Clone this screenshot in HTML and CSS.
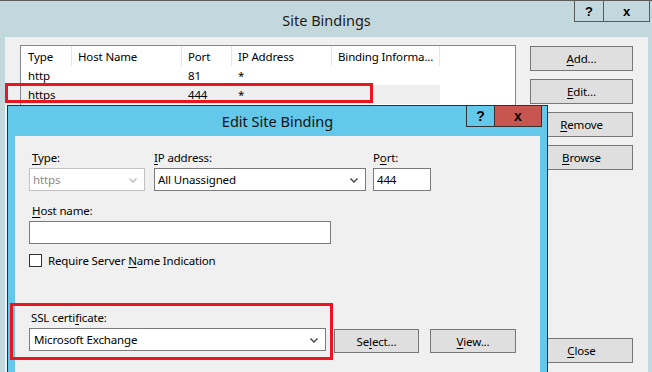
FILE: index.html
```html
<!DOCTYPE html>
<html>
<head>
<meta charset="utf-8">
<title>Site Bindings</title>
<link rel="stylesheet" href="styles.css">
</head>
<body>
<div class="win">
  <div class="titlebar">
    <span class="title">Site Bindings</span>
  </div>
  <div class="caption">
    <span class="cbtn cbtn-help">?</span><span class="cbtn cbtn-close">x</span>
  </div>
  <div class="client">
    <div class="list">
      <div class="lrow lhead">
        <span class="c c1">Type</span><span class="c c2">Host Name</span><span class="c c3">Port</span><span class="c c4">IP Address</span><span class="c c5">Binding Informa...</span>
      </div>
      <div class="lrow">
        <span class="c c1">http</span><span class="c c2"></span><span class="c c3">81</span><span class="c c4">*</span><span class="c c5"></span>
      </div>
      <div class="lrow sel">
        <span class="c c1">https</span><span class="c c2"></span><span class="c c3">444</span><span class="c c4">*</span><span class="c c5"></span>
      </div>
    </div>
    <div class="side">
      <button class="btn"><u>A</u>dd...</button>
      <button class="btn"><u>E</u>dit...</button>
      <button class="btn"><u>R</u>emove</button>
      <button class="btn"><u>B</u>rowse</button>
      <button class="btn btn-close"><u>C</u>lose</button>
    </div>
  </div>
</div>

<div class="mark mark-row"></div>

<div class="dlg">
  <div class="dlg-title">Edit Site Binding</div>
  <div class="dlg-caption">
    <span class="dbtn dbtn-help">?</span><span class="dbtn dbtn-close">x</span>
  </div>
  <div class="dlg-body">
    <div class="row1">
      <div class="field f-type">
        <label class="lbl lbl-in"><u>T</u>ype:</label>
        <div class="combo disabled"><span>https</span>
          <svg class="chev" width="8" height="5" viewBox="0 0 8 5"><polyline points="0.5,0.5 4,4 7.5,0.5" fill="none" stroke="currentColor" stroke-width="1.4"/></svg>
        </div>
      </div>
      <div class="field f-ip">
        <label class="lbl"><u>I</u>P address:</label>
        <div class="combo"><span>All Unassigned</span>
          <svg class="chev" width="8" height="5" viewBox="0 0 8 5"><polyline points="0.5,0.5 4,4 7.5,0.5" fill="none" stroke="currentColor" stroke-width="1.4"/></svg>
        </div>
      </div>
      <div class="field f-port">
        <label class="lbl">P<u>o</u>rt:</label>
        <div class="text">444</div>
      </div>
    </div>
    <label class="lbl lbl-in lbl-host"><u>H</u>ost name:</label>
    <div class="text host"></div>
    <div class="check">
      <span class="box"></span>
      <span>Require Server <u>N</u>ame Indication</span>
    </div>
    <label class="lbl lbl-ssl">SSL certi<u>f</u>icate:</label>
    <div class="row-ssl">
      <div class="combo ssl"><span>Microsoft Exchange</span>
        <svg class="chev" width="8" height="5" viewBox="0 0 8 5"><polyline points="0.5,0.5 4,4 7.5,0.5" fill="none" stroke="currentColor" stroke-width="1.4"/></svg>
      </div>
      <button class="btn btn-select">Se<u>l</u>ect...</button>
      <button class="btn btn-view"><u>V</u>iew...</button>
    </div>
  </div>
</div>

<div class="mark mark-ssl"></div>
</body>
</html>
```

FILE: styles.css
```css
* { box-sizing: border-box; margin: 0; padding: 0; }

html, body {
  width: 652px;
  height: 372px;
  overflow: hidden;
}

body {
  position: relative;
  font-family: "Noto Sans", "Open Sans", sans-serif;
  font-size: 11.5px;
  letter-spacing: -0.15px;
  color: #000;
  background: #c3d8dd;
}

u { text-decoration: underline; text-underline-offset: 2px; }

/* ---------- main window ---------- */
.win {
  position: relative;
  height: 372px;
  border-top: 1px solid #5d5d5d;
  background: #c3d8dd;
  padding: 0 4px 0 5px;
  display: flex;
  flex-direction: column;
}

.titlebar {
  height: 36px;
  display: flex;
  align-items: center;
  justify-content: center;
  flex: none;
}

.title {
  font-size: 14.5px;
  letter-spacing: 0;
  color: #1b1b1b;
  padding-top: 1px;
}

.caption {
  position: absolute;
  top: -1px;
  right: 2px;
  display: flex;
}

.cbtn {
  height: 22px;
  border: 1px solid #5a5a5a;
  display: flex;
  align-items: center;
  justify-content: center;
  font-family: "Liberation Sans", sans-serif;
  font-weight: bold;
  font-size: 13px;
  letter-spacing: 0;
  color: #000;
}
.cbtn-help { width: 30px; }
.cbtn-close { width: 46px; border-left: none; }

.client {
  flex: 1;
  background: #f0f0f0;
  display: flex;
  padding: 8px 15px 0 15px;
}

.list {
  width: 496px;
  height: 290px;
  background: #fff;
  border: 1px solid #828790;
  flex: none;
}

.lrow {
  display: flex;
  height: 19px;
  align-items: center;
}
.lhead { height: 20px; }
.lrow.sel .c { background: #efefef; }

.c {
  height: 100%;
  display: flex;
  align-items: center;
  padding-left: 6px;
  white-space: nowrap;
  overflow: hidden;
}
.c1 { width: 51px; padding-left: 7px; }
.c2 { width: 110px; }
.c3 { width: 50px; }
.c4 { width: 100px; }
.c5 { width: 108px; }

.lhead .c { border-right: 1px solid #e5e5e5; }

.side {
  margin-left: 14px;
  width: 103px;
  display: flex;
  flex-direction: column;
  gap: 8px;
  padding-top: 1px;
}

.btn {
  height: 25px;
  background: #dfdfdf;
  border: 1px solid #777;
  font-family: inherit;
  font-size: 11.5px;
  letter-spacing: -0.15px;
  color: #000;
  display: flex;
  align-items: center;
  justify-content: center;
}

.side .btn { width: 103px; }
.side .btn-close { margin-top: 160px; }

/* ---------- annotation marks ---------- */
.mark {
  position: absolute;
  border: 3px solid #e8171f;
  pointer-events: none;
}
.mark-row { left: 5px; top: 83px; width: 368px; height: 20px; }
.mark-ssl { left: 10px; top: 303px; width: 323px; height: 57px; }

/* ---------- edit dialog ---------- */
.dlg {
  position: absolute;
  left: 7px;
  top: 105px;
  width: 541px;
  height: 300px;
  border: 1px solid #2e2e2e;
  background: #63c8ea;
  padding: 0 7px;
}

.dlg-title {
  height: 30px;
  display: flex;
  align-items: center;
  justify-content: center;
  font-size: 14.5px;
  letter-spacing: 0;
  color: #111;
}

.dlg-caption {
  position: absolute;
  top: -1px;
  right: 5px;
  display: flex;
}

.dbtn {
  height: 22px;
  border: 1px solid #333;
  display: flex;
  align-items: center;
  justify-content: center;
  font-family: "Liberation Sans", sans-serif;
  font-weight: bold;
  font-size: 14px;
  letter-spacing: 0;
  color: #000;
}
.dbtn-help { width: 29px; background: #63c8ea; }
.dbtn-close { width: 47px; border-left: none; background: #c75650; }

.dlg-body {
  background: #f0f0f0;
  height: 270px;
  padding: 14px 0 0 14px;
}

.row1 { display: flex; }

.field { display: flex; flex-direction: column; }
.f-type { width: 116px; }
.f-ip { width: 212px; margin-left: 9px; }
.f-port { width: 58px; margin-left: 7px; }

.lbl {
  display: block;
  height: 16px;
  line-height: 16px;
  margin-bottom: 2px;
  white-space: nowrap;
}
.lbl-in { padding-left: 3px; }

.combo, .text {
  height: 23px;
  background: #fff;
  border: 1px solid #7a7a7a;
  display: flex;
  align-items: center;
  padding-left: 3px;
  position: relative;
  color: #000;
}

.combo .chev {
  position: absolute;
  right: 7px;
  top: 9px;
  color: #444;
}

.combo.disabled {
  border-color: #c2c2c2;
  color: #8a8a8a;
}
.combo.disabled .chev { color: #bbb; }

.lbl-host { margin-top: 12px; padding-left: 3px; }
.host { width: 302px; }

.check {
  margin-top: 10px;
  height: 13px;
  display: flex;
  align-items: center;
  gap: 6px;
  white-space: nowrap;
}
.check .box {
  width: 13px;
  height: 13px;
  border: 1px solid #333;
  background: #fff;
  flex: none;
}

.lbl-ssl { margin-top: 43px; padding-left: 2px; }

.row-ssl {
  display: flex;
  align-items: flex-start;
}
.combo.ssl { width: 297px; padding-left: 4px; }
.btn-select { width: 85px; margin-left: 8px; margin-top: 1px; height: 24px; }
.btn-view { width: 86px; margin-left: 11px; margin-top: 1px; height: 24px; }
```
